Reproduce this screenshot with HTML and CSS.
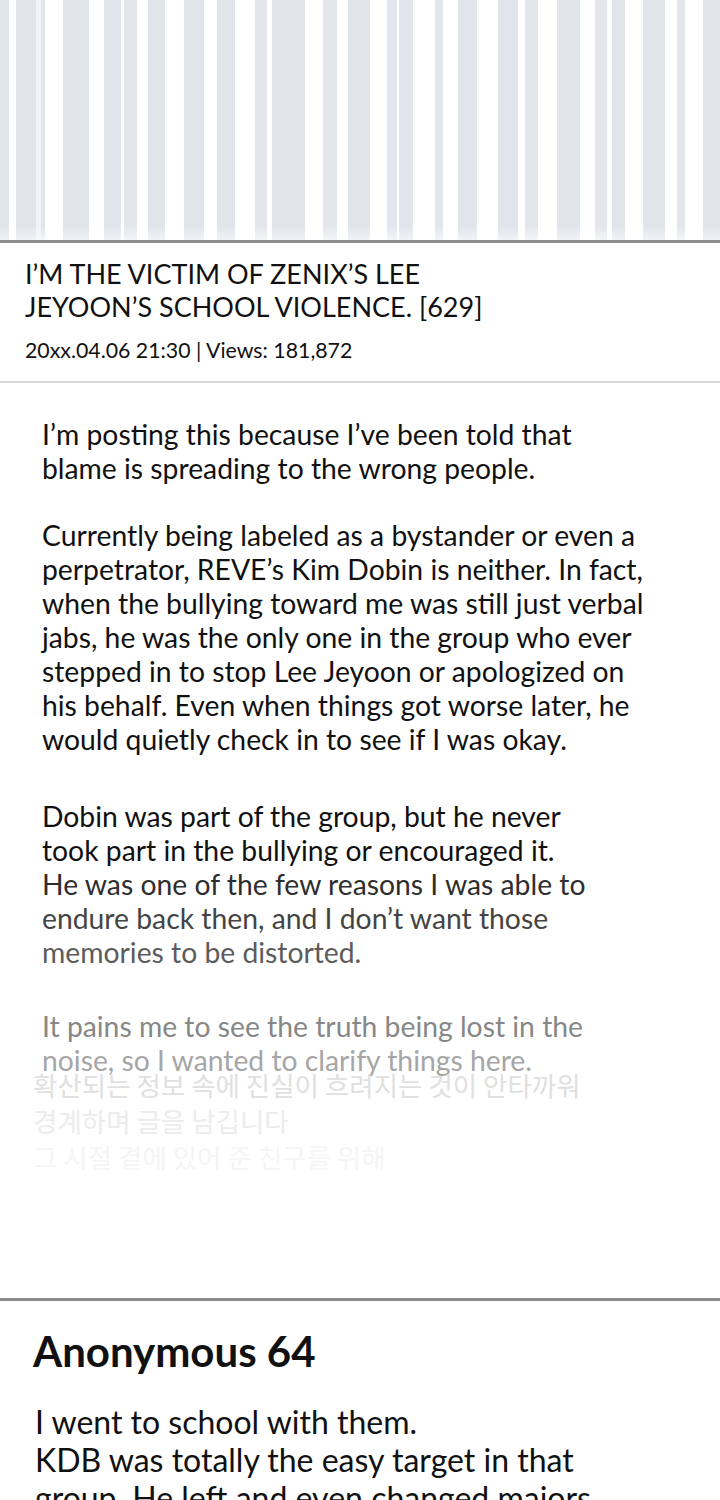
FILE: index.html
```html
<!DOCTYPE html>
<html lang="en">
<head>
<meta charset="utf-8">
<title>Post</title>
<link rel="stylesheet" href="styles.css">
</head>
<body>
<div id="page">
    <div class="banner"></div>

    <div class="post-head">
        <h1 class="post-title">I’M THE VICTIM OF ZENIX’S LEE<br>JEYOON’S SCHOOL VIOLENCE. [629]</h1>
        <p class="post-meta">20xx.04.06 21:30 | Views: 181,872</p>
    </div>

    <div class="post-body">
        <p class="para">I’m posting this because I’ve been told that<br>blame is spreading to the wrong people.</p>

        <p class="para">Currently being labeled as a bystander or even a<br>perpetrator, REVE’s Kim Dobin is neither. In fact,<br>when the bullying toward me was still just verbal<br>jabs, he was the only one in the group who ever<br>stepped in to stop Lee Jeyoon or apologized on<br>his behalf. Even when things got worse later, he<br>would quietly check in to see if I was okay.</p>

        <p class="para para-3">Dobin was part of the group, but he never<br>took part in the bullying or encouraged it.<br><span class="tone1">He was one of the few reasons I was able to</span><br><span class="tone2">endure back then, and I don’t want those</span><br><span class="tone3">memories to be distorted.</span></p>

        <p class="para para-4"><span class="tone4">It pains me to see the truth being lost in the</span><br><span class="tone5">noise, so I wanted to clarify things here.</span></p>

        <p class="ko"><span class="ko1">확산되는 정보 속에 진실이 흐려지는 것이 안타까워</span><br><span class="ko2">경계하며 글을 남깁니다</span><br><span class="ko3">그 시절 곁에 있어 준 친구를 위해</span></p>
    </div>

    <div class="comment">
        <h2 class="comment-name">Anonymous 64</h2>
        <p class="comment-text">I went to school with them.<br>KDB was totally the easy target in that<br>group. He left and even changed majors</p>
    </div>
</div>
</body>
</html>
```

FILE: styles.css
```css
* {
    margin: 0;
    padding: 0;
}

body {
    background: #fff;
    font-family: "Lato", "Noto Sans CJK KR", sans-serif;
    color: #111;
}

#page {
    width: 720px;
    height: 1500px;
    overflow: hidden;
}

/* 上面的条纹 */
.banner {
    height: 240px;
    background:
        linear-gradient(to bottom, rgba(255,255,255,0) 226px, rgba(255,255,255,.55) 240px),
        linear-gradient(to right,
            #e0e5ec 0 9px, #fff 9px 16px, #e0e5ec 16px 36px, #f1f3f6 36px 41px,
            #e0e5ec 41px 45px, #fff 45px 63px, #e0e5ec 63px 89px, #fff 89px 104px,
            #e0e5ec 104px 121px, #fff 121px 124px, #e3e7ec 124px 137px, #fff 137px 148px,
            #e0e5ec 148px 165px, #fff 165px 184px, #e0e5ec 184px 204px, #fff 204px 217px,
            #e0e5ec 217px 235px, #fff 235px 255px, #e3e7ec 255px 267px, #fff 267px 272px,
            #e0e5ec 272px 305px, #fff 305px 323px, #e3e7ec 323px 337px, #fff 337px 348px,
            #e0e5ec 348px 370px, #fff 370px 387px, #e3e7ec 387px 397px, #fff 397px 399px,
            #e0e5ec 399px 413px, #fff 413px 435px, #e3e7ec 435px 443px, #fff 443px 458px,
            #e0e5ec 458px 477px, #fff 477px 498px, #e0e5ec 498px 518px, #fff 518px 525px,
            #e3e7ec 525px 538px, #fff 538px 557px, #e0e5ec 557px 580px, #fff 580px 595px,
            #e3e7ec 595px 607px, #fff 607px 612px, #e0e5ec 612px 625px, #fff 625px 643px,
            #e0e5ec 643px 665px, #fff 665px 677px, #e3e7ec 677px 685px, #fff 685px 703px,
            #e0e5ec 703px 720px);
}

.post-head {
    border-top: 3px solid #8c8c8c;
    border-bottom: 2px solid #d9d9d9;
    padding: 14px 25px 0;
    height: 124px;
}

.post-title {
    font-size: 27px;
    font-weight: 400;
    line-height: 33px;
    white-space: nowrap;
}

.post-meta {
    margin-top: 13px;
    font-size: 21.3px;
    line-height: 28px;
}

.post-body {
    padding: 34px 42px 0;
    height: 881px;
}

.para {
    font-size: 28.3px;
    line-height: 34px;
    white-space: nowrap;
    margin-bottom: 33px;
}

.para-3 {
    margin-top: 43px;
}

.para-4 {
    margin-top: 40px;
    margin-bottom: 0;
}

.para-3,
.para-2 {
    margin-bottom: 0;
}

/* 越往下越淡 */
.tone1 { color: #2e2e2e; }
.tone2 { color: #444; }
.tone3 { color: #5c5c5c; }
.tone4 { color: #878787; }
.tone5 { color: #a6a6a6; }

.ko {
    margin: -10px 0 0 -9px;
    font-family: "Noto Sans CJK KR", sans-serif;
    font-size: 26.5px;
    line-height: 36px;
    white-space: nowrap;
}

.ko1 { color: #e0e0e0; }
.ko2 { color: #ececec; }
.ko3 { color: #f5f5f5; }

.comment {
    border-top: 3px solid #8a8a8a;
    padding: 24px 33px 0;
}

.comment-name {
    font-size: 42px;
    font-weight: 700;
    line-height: 52px;
}

.comment-text {
    margin-top: 26px;
    padding-left: 2px;
    font-size: 32px;
    line-height: 38px;
    white-space: nowrap;
}
```
